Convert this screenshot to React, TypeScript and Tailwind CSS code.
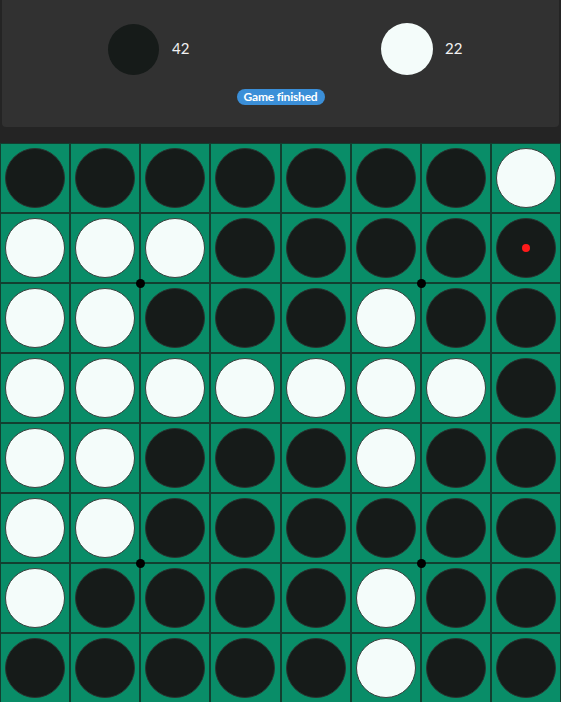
const board = [
  "BBBBBBBW",
  "WWWBBBBB",
  "WWBBBWBB",
  "WWWWWWWB",
  "WWBBBWBB",
  "WWBBBBBB",
  "WBBBBWBB",
  "BBBBBWBB",
];

const lastMove = { r: 1, c: 7 };

export default function App() {
  const font = { fontFamily: "Lato, 'Open Sans', sans-serif" };
  return (
    <div className="bg-[#242424] min-h-screen" style={font}>
      <div className="mx-[2px] h-[127px] rounded-b-[4px] bg-[#313131] flex flex-col items-center">
        <div className="flex items-center justify-center gap-[192px] pl-[9px] pt-[23px]">
          <div className="flex items-center gap-[13px]">
            <div className="w-[51px] h-[51px] rounded-full bg-[#161b19]" />
            <span className="text-[15px] text-[#f2f2f2] w-[17px] -mt-[1px]">42</span>
          </div>
          <div className="flex items-center gap-[12px]">
            <div className="w-[52px] h-[52px] rounded-full bg-[#f4fcfa]" />
            <span className="text-[15px] text-[#f2f2f2] w-[17px] -mt-[1px]">22</span>
          </div>
        </div>
        <div className="mt-[14px] h-[16px] px-[7px] rounded-full bg-[#3b8fd8] text-white text-[12px] font-bold leading-[16px] tracking-[-0.2px]">
          Game finished
        </div>
      </div>
      <div className="h-[16px]" />
      <div className="relative grid grid-cols-8 bg-[#098d68]">
        {board.map((row, r) =>
          row.split("").map((cell, c) => (
            <div
              key={`${r}-${c}`}
              className="h-[70px] border border-[#123f30] flex items-center justify-center"
            >
              <div
                className={`w-[60px] h-[60px] rounded-full border flex items-center justify-center ${
                  cell === "B" ? "bg-[#161b19] border-[#2a3430]" : "bg-[#f4fcfa] border-[#3a3f3d]"
                }`}
              >
                {r === lastMove.r && c === lastMove.c && (
                  <div className="w-[8px] h-[8px] rounded-full bg-[#ff1a1a]" />
                )}
              </div>
            </div>
          ))
        )}
        {[
          ["25%", "140px"],
          ["75%", "140px"],
          ["25%", "420px"],
          ["75%", "420px"],
        ].map(([x, y]) => (
          <div
            key={x + y}
            className="absolute w-[9px] h-[9px] -ml-[4px] -mt-[4px] rounded-full bg-black"
            style={{ left: x, top: y }}
          />
        ))}
      </div>
    </div>
  );
}
